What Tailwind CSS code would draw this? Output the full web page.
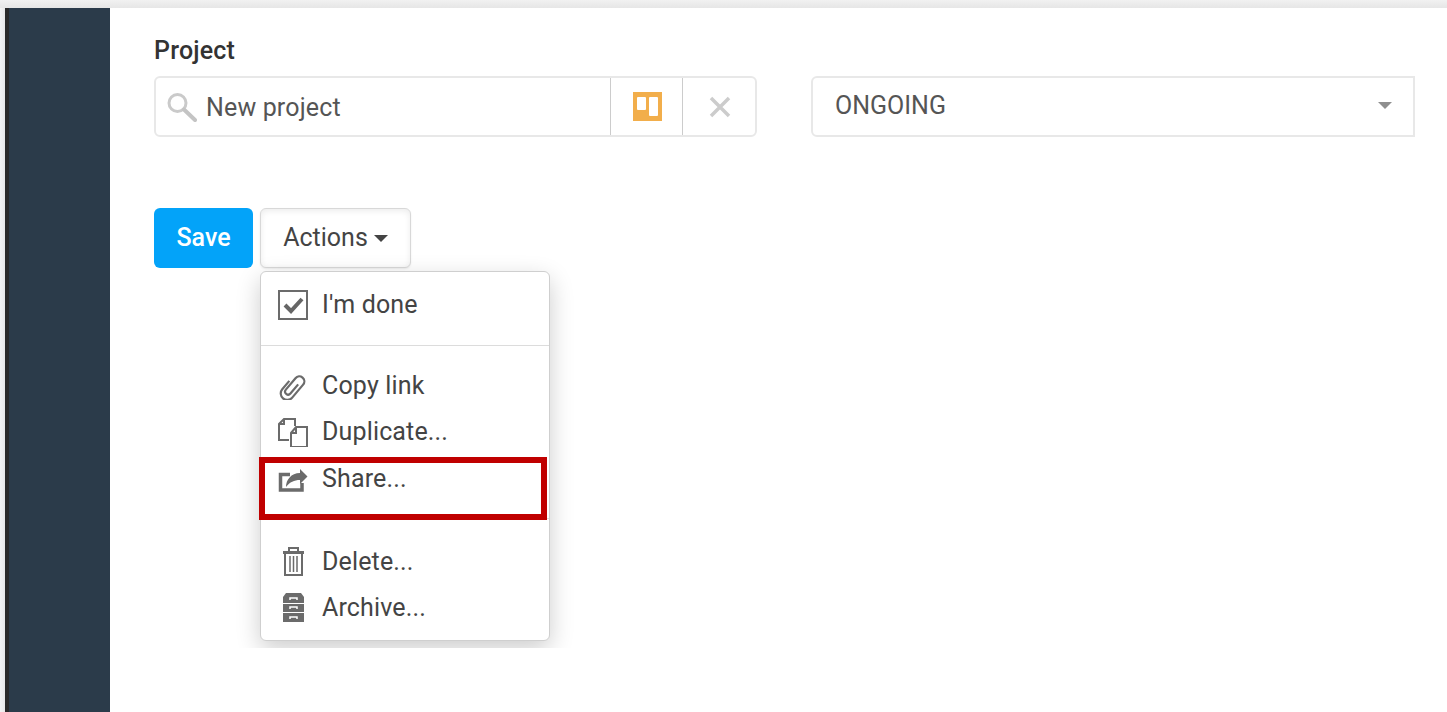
<!DOCTYPE html>
<html lang="en">
<head>
    <meta charset="UTF-8">
    <title>Project</title>
    <script src="https://cdn.jsdelivr.net/npm/@tailwindcss/browser@4"></script>
</head>
<body class="bg-white font-['Roboto',sans-serif] h-[712px] overflow-hidden flex flex-col">

    <!-- Top edge -->
    <div class="h-2 shrink-0 bg-gradient-to-b from-[#f1f1f1] to-[#e6e6e6]"></div>

    <div class="flex flex-1 min-h-0">
        <!-- Sidebar -->
        <div class="w-[5px] shrink-0 bg-gradient-to-r from-[#f4f4f4] to-[#e8e8e8]"></div>
        <div class="w-[105px] shrink-0 bg-[#2b3b4a] border-l-4 border-[#2a2a2a]"></div>

        <!-- Main Content -->
        <main class="flex-1 pl-11 pt-[25px] relative overflow-hidden">
            <div class="text-[25px] leading-[36px] font-medium text-[#333] h-[43px] tracking-[0.2px]">Project</div>

            <div class="flex gap-[54px]">
                <div class="w-[603px] h-[61px] flex border-2 border-[#e8e8e8] rounded-md">
                    <div class="flex-1 flex items-center pl-[11px] gap-[9px] pt-[2px] text-[25px] tracking-[0.15px] text-[#555]">
                        <svg class="w-[30px] h-[30px] -mt-[2px]" viewBox="0 0 30 30" fill="none">
                            <circle cx="10.5" cy="11" r="8.5" stroke="#cacaca" stroke-width="3"/>
                            <path d="M17 17.5L28 28" stroke="#c4c4c4" stroke-width="4" stroke-linecap="round"/>
                        </svg>
                        <span>New project</span>
                    </div>
                    <div class="w-[72px] flex items-center justify-center border-l border-[#cccccc]">
                        <svg class="w-[29px] h-[29px] ml-[2px]" viewBox="0 0 29 29">
                            <rect width="29" height="29" fill="#f2ae4b"/>
                            <rect x="4" y="5" width="9" height="13" rx="1" fill="#fff"/>
                            <rect x="16" y="5" width="9" height="19" rx="1" fill="#fff"/>
                        </svg>
                    </div>
                    <div class="w-[73px] flex items-center justify-center border-l border-[#cccccc]">
                        <svg class="w-[22px] h-[22px] ml-[2px]" viewBox="0 0 22 22" fill="none">
                            <path d="M2 2L20 20M20 2L2 20" stroke="#cccccc" stroke-width="3.5"/>
                        </svg>
                    </div>
                </div>

                <div class="w-[604px] h-[61px] flex items-center justify-between pl-[22px] pr-[21px] pb-[2px] border-2 border-[#e8e8e8] rounded-l-md text-[25px] text-[#555]">
                    <span>ONGOING</span>
                    <span class="border-x-[7px] border-t-[7px] border-x-transparent border-t-[#8f8f8f]"></span>
                </div>
            </div>

            <div class="flex gap-[7px] mt-[71px]">
                <button class="w-[99px] h-[60px] bg-[#03a3f9] rounded-md text-white text-[25px] font-medium">Save</button>
                <button class="w-[151px] h-[60px] flex items-center justify-center gap-[6px] bg-white border border-[#d8d8d8] rounded-md shadow-[inset_0_2px_6px_rgba(0,0,0,0.08),0_1px_2px_rgba(0,0,0,0.08)] text-[25px] text-[#444]">
                    Actions
                    <span class="border-x-[7px] border-t-[7px] border-x-transparent border-t-[#444]"></span>
                </button>
            </div>

            <!-- Clips the dropdown shadow, the screenshot was cropped right under it -->
            <div class="absolute left-[120px] top-[233px] w-[360px] h-[407px] overflow-hidden">
                <!-- Actions Dropdown -->
                <div class="absolute left-[30px] top-[30px] w-[290px] h-[370px] bg-white border border-[#cfcfcf] rounded-md shadow-[0_8px_24px_rgba(0,0,0,0.2)] text-[25px] tracking-[0.15px] leading-[46px] text-[#444]">
                    <div class="h-[74px] pt-[9px] flex items-start pl-[17px] gap-[14px] border-b border-[#dcdcdc]">
                        <svg class="w-[30px] h-[30px] mt-[9px] shrink-0" viewBox="0 0 30 30" fill="none">
                            <rect x="1" y="1" width="28" height="28" stroke="#6b6b6b" stroke-width="2"/>
                            <path d="M7 15L13 21L24 9" stroke="#666" stroke-width="4"/>
                        </svg>
                        <span class="mt-px">I'm done</span>
                    </div>
                    <div class="pt-4 flex flex-col">
                        <div class="flex items-center h-[46px] pl-[17px] gap-[14px]">
                            <svg class="w-[30px] h-[30px] shrink-0" viewBox="0 0 30 30" fill="none">
                                <g transform="translate(3 1) rotate(40 11 16)">
                                    <path d="M14 10V22a3 3 0 0 1-6 0V7a5 5 0 0 1 10 0V24a6.500 6.500 0 0 1-13 0V13" stroke="#6b6b6b" stroke-width="2.200"/>
                                </g>
                            </svg>
                            <span class="mt-[2px]">Copy link</span>
                        </div>
                        <div class="flex items-center h-[46px] pl-[17px] gap-[14px]">
                            <svg class="w-[30px] h-[30px] mt-[2px] shrink-0" viewBox="0 0 30 30" fill="none" stroke="#6b6b6b" stroke-width="2">
                                <path d="M11 23H1V7L6 2H17V9"/>
                                <path d="M6 2V7H1"/>
                                <path d="M13 16L18 10H29V30H13Z"/>
                                <path d="M18 10V16H13"/>
                            </svg>
                            <span class="mt-[2px]">Duplicate...</span>
                        </div>
                        <div class="flex items-start h-[47px] pl-[17px] gap-[14px]">
                            <svg class="w-[30px] h-[30px] mt-[14px] shrink-0" viewBox="0 0 30 30" fill="none">
                                <path d="M24 15V22H2.500V6.500H12" stroke="#6b6b6b" stroke-width="3.500"/>
                                <path d="M22 1L29.500 8.500L22 16V12C16 12 12 14 8 19C8 12 13 5 22 5Z" fill="#6b6b6b"/>
                            </svg>
                            <span class="mt-[2px]">Share...</span>
                        </div>
                    </div>
                    <div class="h-px bg-[#dcdcdc] mt-[17px]"></div>
                    <div class="pt-[19px] flex flex-col">
                        <div class="flex items-center h-[46px] pl-[17px] gap-[14px]">
                            <svg class="w-[30px] h-[30px] shrink-0" viewBox="0 0 30 30" fill="none" stroke="#6b6b6b" stroke-width="2">
                                <path d="M5 6.500H26" stroke-width="3"/>
                                <path d="M11 5V2H20V5"/>
                                <path d="M7 8V29H24V8"/>
                                <path d="M12 10V26M15.500 10V26M19 10V26" stroke-width="1.500"/>
                            </svg>
                            <span class="mt-[2px]">Delete...</span>
                        </div>
                        <div class="flex items-center h-[46px] pl-[17px] gap-[14px]">
                            <svg class="w-[30px] h-[30px] shrink-0" viewBox="0 0 30 30">
                                <path d="M5 11V5L8 1H23L26 5V11Z" fill="#6b6b6b"/>
                                <rect x="5" y="12" width="21" height="8" fill="#6b6b6b"/>
                                <rect x="5" y="21" width="21" height="9" fill="#6b6b6b"/>
                                <path d="M12 8V6H19V8M12 17V15H19V17M12 27V25H19V27" stroke="#fff" stroke-width="1.500" fill="none"/>
                            </svg>
                            <span class="mt-[2px]">Archive...</span>
                        </div>
                    </div>
                </div>
            </div>

            <!-- Highlight box -->
            <div class="absolute left-[149px] top-[449px] w-[288px] h-[63px] border-[6px] border-[#c00000]"></div>
        </main>
    </div>
</body>
</html>
